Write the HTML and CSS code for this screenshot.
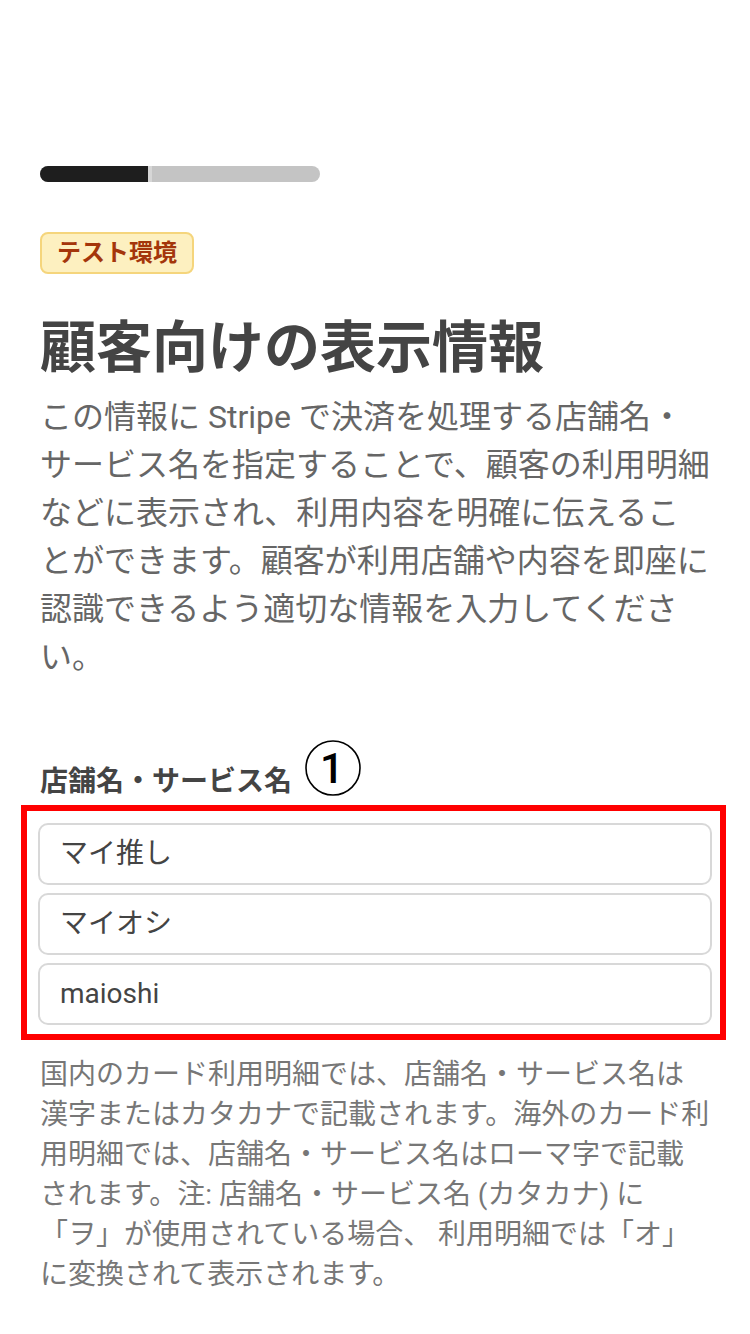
FILE: index.html
```html
<!DOCTYPE html>
<html lang="ja">
<head>
<meta charset="utf-8">
<link rel="stylesheet" href="styles.css">
    <title>顧客向けの表示情報</title>
</head>
<body>
    <div class="progress">
        <div class="progress-fill"></div>
    </div>

    <div class="tag-row">
        <span class="badge">テスト環境</span>
    </div>

    <h1>顧客向けの表示情報</h1>
    <p class="lead">この情報に Stripe で決済を処理する店舗名・<br>サービス名を指定することで、顧客の利用明細<br>などに表示され、利用内容を明確に伝えるこ<br>とができます。顧客が利用店舗や内容を即座に<br>認識できるよう適切な情報を入力してくださ<br>い。</p>

    <div class="field-label">
        <span class="label-text">店舗名・サービス名</span>
        <svg class="step-mark" width="56" height="56" viewBox="0 0 56 56">
            <circle cx="28" cy="28" r="27" fill="none" stroke="#000" stroke-width="1.6"/>
            <text x="27" y="43" text-anchor="middle" font-family="Roboto, sans-serif" font-weight="500" font-size="42" fill="#000">1</text>
        </svg>
    </div>

    <div class="name-box">
        <div class="name-input">マイ推し</div>
        <div class="name-input">マイオシ</div>
        <div class="name-input">maioshi</div>
    </div>

    <p class="note">国内のカード利用明細では、店舗名・サービス名は<br>漢字またはカタカナで記載されます。海外のカード利<br>用明細では、店舗名・サービス名はローマ字で記載<br>されます。注: 店舗名・サービス名 (カタカナ) に<br>「ヲ」が使用されている場合、 利用明細では「オ」<br>に変換されて表示されます。</p>
</body>
</html>
```

FILE: styles.css
```css
body {
    font-family: Roboto, "Noto Sans CJK JP", sans-serif;
    background: #fff;
    margin: 0;
    padding: 166px 30px 0 40px;
    color: #444;
}

/* progress bar */
.progress {
    width: 280px;
    height: 16px;
    border-radius: 8px;
    background: #c4c4c4;
    overflow: hidden;
}

.progress-fill {
    width: 112px;
    height: 100%;
    box-sizing: border-box;
    background: #1e1e1e;
    border-right: 4px solid #d6d6d6;
}

.tag-row {
    margin-top: 50px;
    display: flex;
}

.badge {
    height: 42px;
    box-sizing: border-box;
    padding: 0 15px;
    border: 2px solid #f5d57c;
    border-radius: 8px;
    background: #fdf0c0;
    color: #a4360b;
    font-size: 24px;
    font-weight: bold;
    line-height: 38px;
}

h1 {
    margin: 42px 0 0;
    font-size: 56px;
    line-height: 64px;
    font-weight: bold;
    color: #444;
}

.lead {
    margin: 13px 0 0;
    font-size: 32px;
    line-height: 48px;
    color: #666;
}

.field-label {
    margin-top: 59px;
    display: flex;
    align-items: flex-end;
    gap: 13px;
}

.label-text {
    font-size: 28px;
    line-height: 40px;
    font-weight: bold;
    color: #444;
    padding-bottom: 3px;
}

.step-mark {
    display: block;
    margin-bottom: 9px;
}

/* highlighted group of name inputs */
.name-box {
    margin: 0 -6px 0 -19px;
    border: 6px solid #ff0000;
    padding: 12px 8px 9px 11px;
    display: flex;
    flex-direction: column;
    gap: 8px;
}

.name-input {
    height: 62px;
    box-sizing: border-box;
    border: 2px solid #d8d8d8;
    border-radius: 10px;
    padding: 0 20px;
    font-size: 28px;
    line-height: 58px;
    color: #444;
}

.note {
    margin: 15px 0 0;
    font-size: 28px;
    line-height: 40px;
    color: #777;
}
```
